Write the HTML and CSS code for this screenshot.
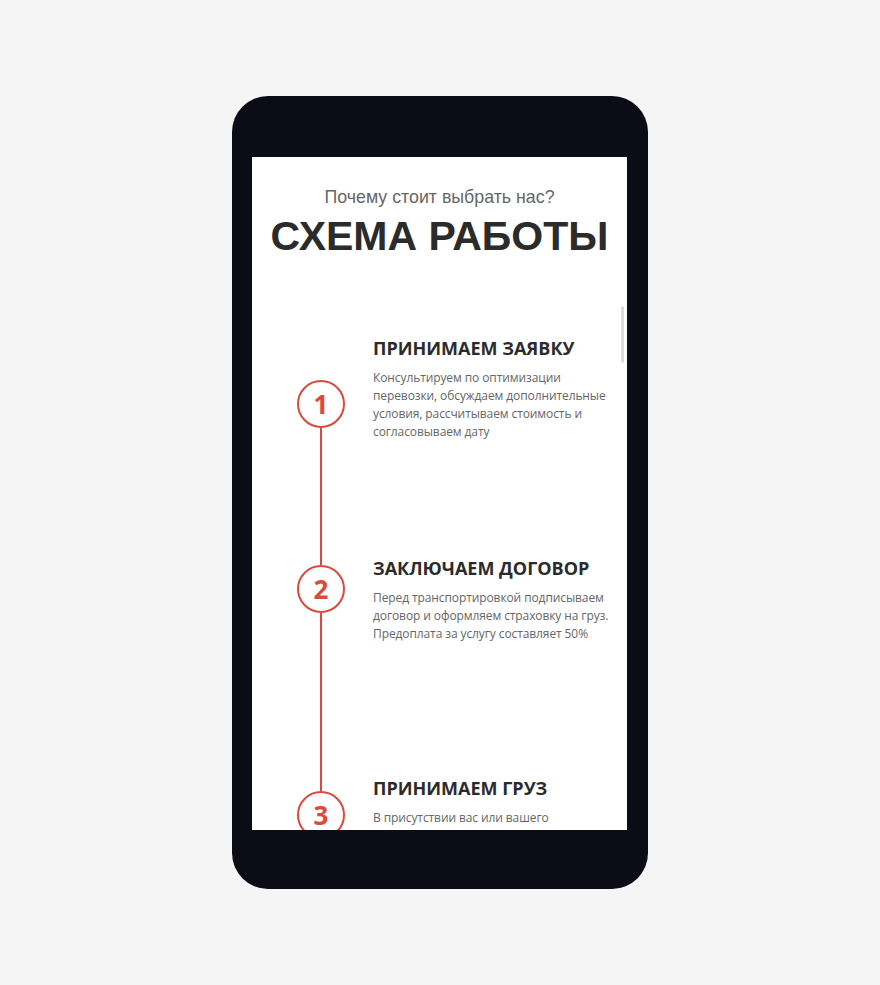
FILE: index.html
```html
<!DOCTYPE html>
<html lang="ru">
<head>
  <meta charset="UTF-8">
  <title>Схема работы</title>
  <meta name="viewport" content="width=device-width, initial-scale=1.0">
  <link rel="stylesheet" href="styles.css">
</head>
<body>

<div class="phone">
  <div class="screen">
    <div class="scroll-thumb"></div>

    <!-- HEADER -->
    <div class="section-head">
      <p class="subtitle">Почему стоит выбрать нас?</p>
      <h1 class="title">СХЕМА РАБОТЫ</h1>
    </div>

    <!-- STEPS -->
    <div class="steps">
      <div class="step step-1">
        <div class="step-mark">
          <span class="seg seg-top blank"></span>
          <span class="circle">1</span>
          <span class="seg seg-bottom"></span>
        </div>
        <div class="step-body">
          <h3>ПРИНИМАЕМ ЗАЯВКУ</h3>
          <p>Консультируем по оптимизации перевозки, обсуждаем дополнительные условия, рассчитываем стоимость и согласовываем дату</p>
        </div>
      </div>

      <div class="step step-2">
        <div class="step-mark">
          <span class="seg seg-top"></span>
          <span class="circle">2</span>
          <span class="seg seg-bottom"></span>
        </div>
        <div class="step-body">
          <h3>ЗАКЛЮЧАЕМ ДОГОВОР</h3>
          <p>Перед транспортировкой подписываем договор и оформляем страховку на груз. Предоплата за услугу составляет 50%</p>
        </div>
      </div>

      <div class="step step-3">
        <div class="step-mark">
          <span class="seg seg-top"></span>
          <span class="circle">3</span>
          <span class="seg seg-bottom"></span>
        </div>
        <div class="step-body">
          <h3>ПРИНИМАЕМ ГРУЗ</h3>
          <p>В присутствии вас или вашего представителя проверяем груз, упаковываем и загружаем его в машину</p>
        </div>
      </div>
    </div>
  </div>
</div>

</body>
</html>
```

FILE: styles.css
```css
body {
  margin: 0;
  background: #f5f5f5;
  display: flex;
  justify-content: center;
  padding-top: 96px;
  font-family: "Liberation Sans", Arial, sans-serif;
}

.phone {
  width: 375px;
  height: 673px;
  padding: 61px 21px 59px 20px;
  background: #0b0c15;
  border-radius: 36px;
}

.screen {
  position: relative;
  width: 375px;
  height: 673px;
  background: #ffffff;
  overflow: hidden;
}

.scroll-thumb {
  position: absolute;
  top: 149px;
  left: 369px;
  width: 3px;
  height: 57px;
  background: #dcdcdc;
  border-radius: 2px;
}

.section-head {
  text-align: center;
  padding-top: 29px;
}

.subtitle {
  margin: 0;
  font-size: 17.8px;
  line-height: 22px;
  color: #666666;
}

.title {
  margin: 4px 0 0;
  font-size: 41px;
  line-height: 48px;
  font-weight: bold;
  color: #2b2b2b;
}

.steps {
  margin-top: 76px;
}

.step {
  display: grid;
  grid-template-columns: 121px 1fr;
  height: 220px;
}

.step-mark {
  display: flex;
  flex-direction: column;
  align-items: center;
  width: 138px;
}

.seg {
  width: 2px;
  background: #db4a3d;
}

.seg.blank {
  background: transparent;
}

.seg-bottom {
  flex: 1;
}

.step-1 .seg-top {
  height: 44px;
}

.step-2 .seg-top {
  height: 9px;
}

.step-3 .seg-top {
  height: 15px;
}

.circle {
  box-sizing: border-box;
  width: 48px;
  height: 48px;
  border: 2px solid #db4a3d;
  border-radius: 50%;
  display: flex;
  align-items: center;
  justify-content: center;
  font-family: "Open Sans", sans-serif;
  font-weight: bold;
  font-size: 26px;
  color: #db4a3d;
}

.step-body {
  padding-right: 6px;
}

.step-body h3 {
  margin: 0;
  font-family: "Open Sans", sans-serif;
  font-size: 18px;
  line-height: 24px;
  font-weight: bold;
  letter-spacing: 0;
  color: #2b2b2b;
}

.step-body p {
  margin: 9px 0 0;
  font-family: "Open Sans", sans-serif;
  font-size: 12px;
  line-height: 18px;
  letter-spacing: -0.1px;
  color: #666666;
}
```
